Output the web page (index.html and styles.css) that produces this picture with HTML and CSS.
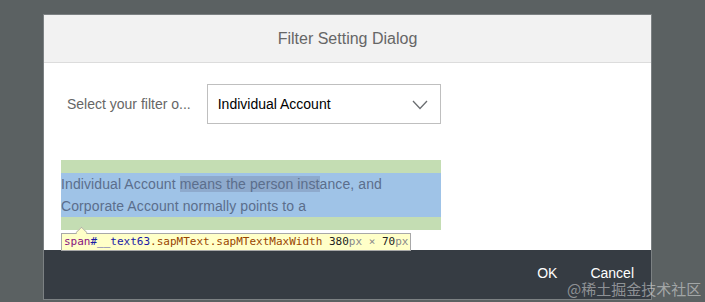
FILE: index.html
```html
<!DOCTYPE html>
<html>
<head>
<meta charset="utf-8">
<link rel="stylesheet" href="styles.css">
</head>
<body>
<div class="dialog">
  <div class="header">Filter Setting Dialog</div>
  <div class="content">
    <div class="form-row">
      <span class="label">Select your filter o...</span>
      <div class="select">
        <span class="select-text">Individual Account</span>
        <svg class="chevron" width="16" height="10" viewBox="0 0 16 10"><path d="M1 1 L8 8.5 L15 1" fill="none" stroke="#6a6d70" stroke-width="1.3"/></svg>
      </div>
    </div>
    <div class="inspect">
      <div class="padbox">
        <div class="contentbox">Individual Account <span class="sel">means the person inst</span>ance, and<br>Corporate Account normally points to a</div>
      </div>
      <div class="tip">
        <span class="t-tag">span</span><span class="t-id">#__text63</span><span class="t-cls">.sapMText.sapMTextMaxWidth</span> <span class="t-num">380</span><span class="t-unit">px</span><span class="t-unit"> × </span><span class="t-num">70</span><span class="t-unit">px</span>
      </div>
    </div>
  </div>
  <div class="footer">
    <span class="btn">OK</span>
    <span class="btn">Cancel</span>
  </div>
</div>
<div class="watermark">@稀土掘金技术社区</div>
</body>
</html>
```
FILE: styles.css
```css
html, body {
  margin: 0;
  padding: 0;
}
body {
  background: #5b6162;
  width: 705px;
  height: 302px;
  overflow: hidden;
  font-family: "Liberation Sans", Arial, sans-serif;
  position: relative;
}
.dialog {
  margin: 15px 0 0 44px;
  width: 607px;
  height: 284px;
  background: #fff;
  display: flex;
  flex-direction: column;
  box-shadow: 0 0 0 1px #7c8183;
}
.header {
  height: 47px;
  background: #f2f2f2;
  border-bottom: 1px solid #dcdcdc;
  display: flex;
  align-items: center;
  justify-content: center;
  font-size: 16px;
  color: #666;
}
.content {
  flex: 1;
  padding: 21px 0 0 17px;
}
.form-row {
  display: flex;
  align-items: center;
  gap: 16px;
  padding-left: 6px;
}
.label {
  font-size: 14px;
  color: #666;
}
.select {
  height: 38px;
  border: 1px solid #bfbfbf;
  display: flex;
  align-items: center;
  justify-content: space-between;
  padding: 0 12px 0 10px;
  box-sizing: content-box;
  width: 210px;
}
.select-text {
  font-size: 14px;
  color: #000;
}
.chevron {
  display: block;
  margin-top: 1px;
}
.inspect {
  position: relative;
  margin-top: 36px;
}
.padbox {
  width: 380px;
  background: #c4ddb3;
  padding: 13px 0;
}
.contentbox {
  background: #9fc3e7;
  font-size: 14px;
  line-height: 22px;
  color: #5b6e8c;
  letter-spacing: 0.1px;
}
.sel {
  background: #8eaacd;
}
.tip {
  position: absolute;
  left: 0;
  top: 73px;
  height: 16px;
  line-height: 16px;
  padding: 0 2px 0 2px;
  background: #ffffc8;
  border: 1px solid #a8a8a8;
  font-family: "DejaVu Sans Mono", "Liberation Mono", monospace;
  font-size: 11px;
  white-space: nowrap;
}
.tip::before {
  content: "";
  position: absolute;
  left: 14px;
  top: -7px;
  width: 10px;
  height: 10px;
  background: #ffffc8;
  border-left: 1px solid #a8a8a8;
  border-top: 1px solid #a8a8a8;
  transform: rotate(45deg) scale(0.75);
}
.t-tag { color: #881280; }
.t-id { color: #1a1aa6; }
.t-cls { color: #994500; }
.t-num { color: #222; }
.t-unit { color: #888; }
.footer {
  height: 49px;
  background: #363c43;
  display: flex;
  align-items: center;
  justify-content: flex-end;
  gap: 33px;
  padding-right: 17px;
}
.btn {
  color: #fff;
  font-size: 14px;
  padding-bottom: 3px;
}
.watermark {
  position: absolute;
  left: 567px;
  top: 278px;
  font-family: "Noto Sans CJK SC", sans-serif;
  font-size: 15px;
  color: rgba(255,255,255,0.45);
}
```
